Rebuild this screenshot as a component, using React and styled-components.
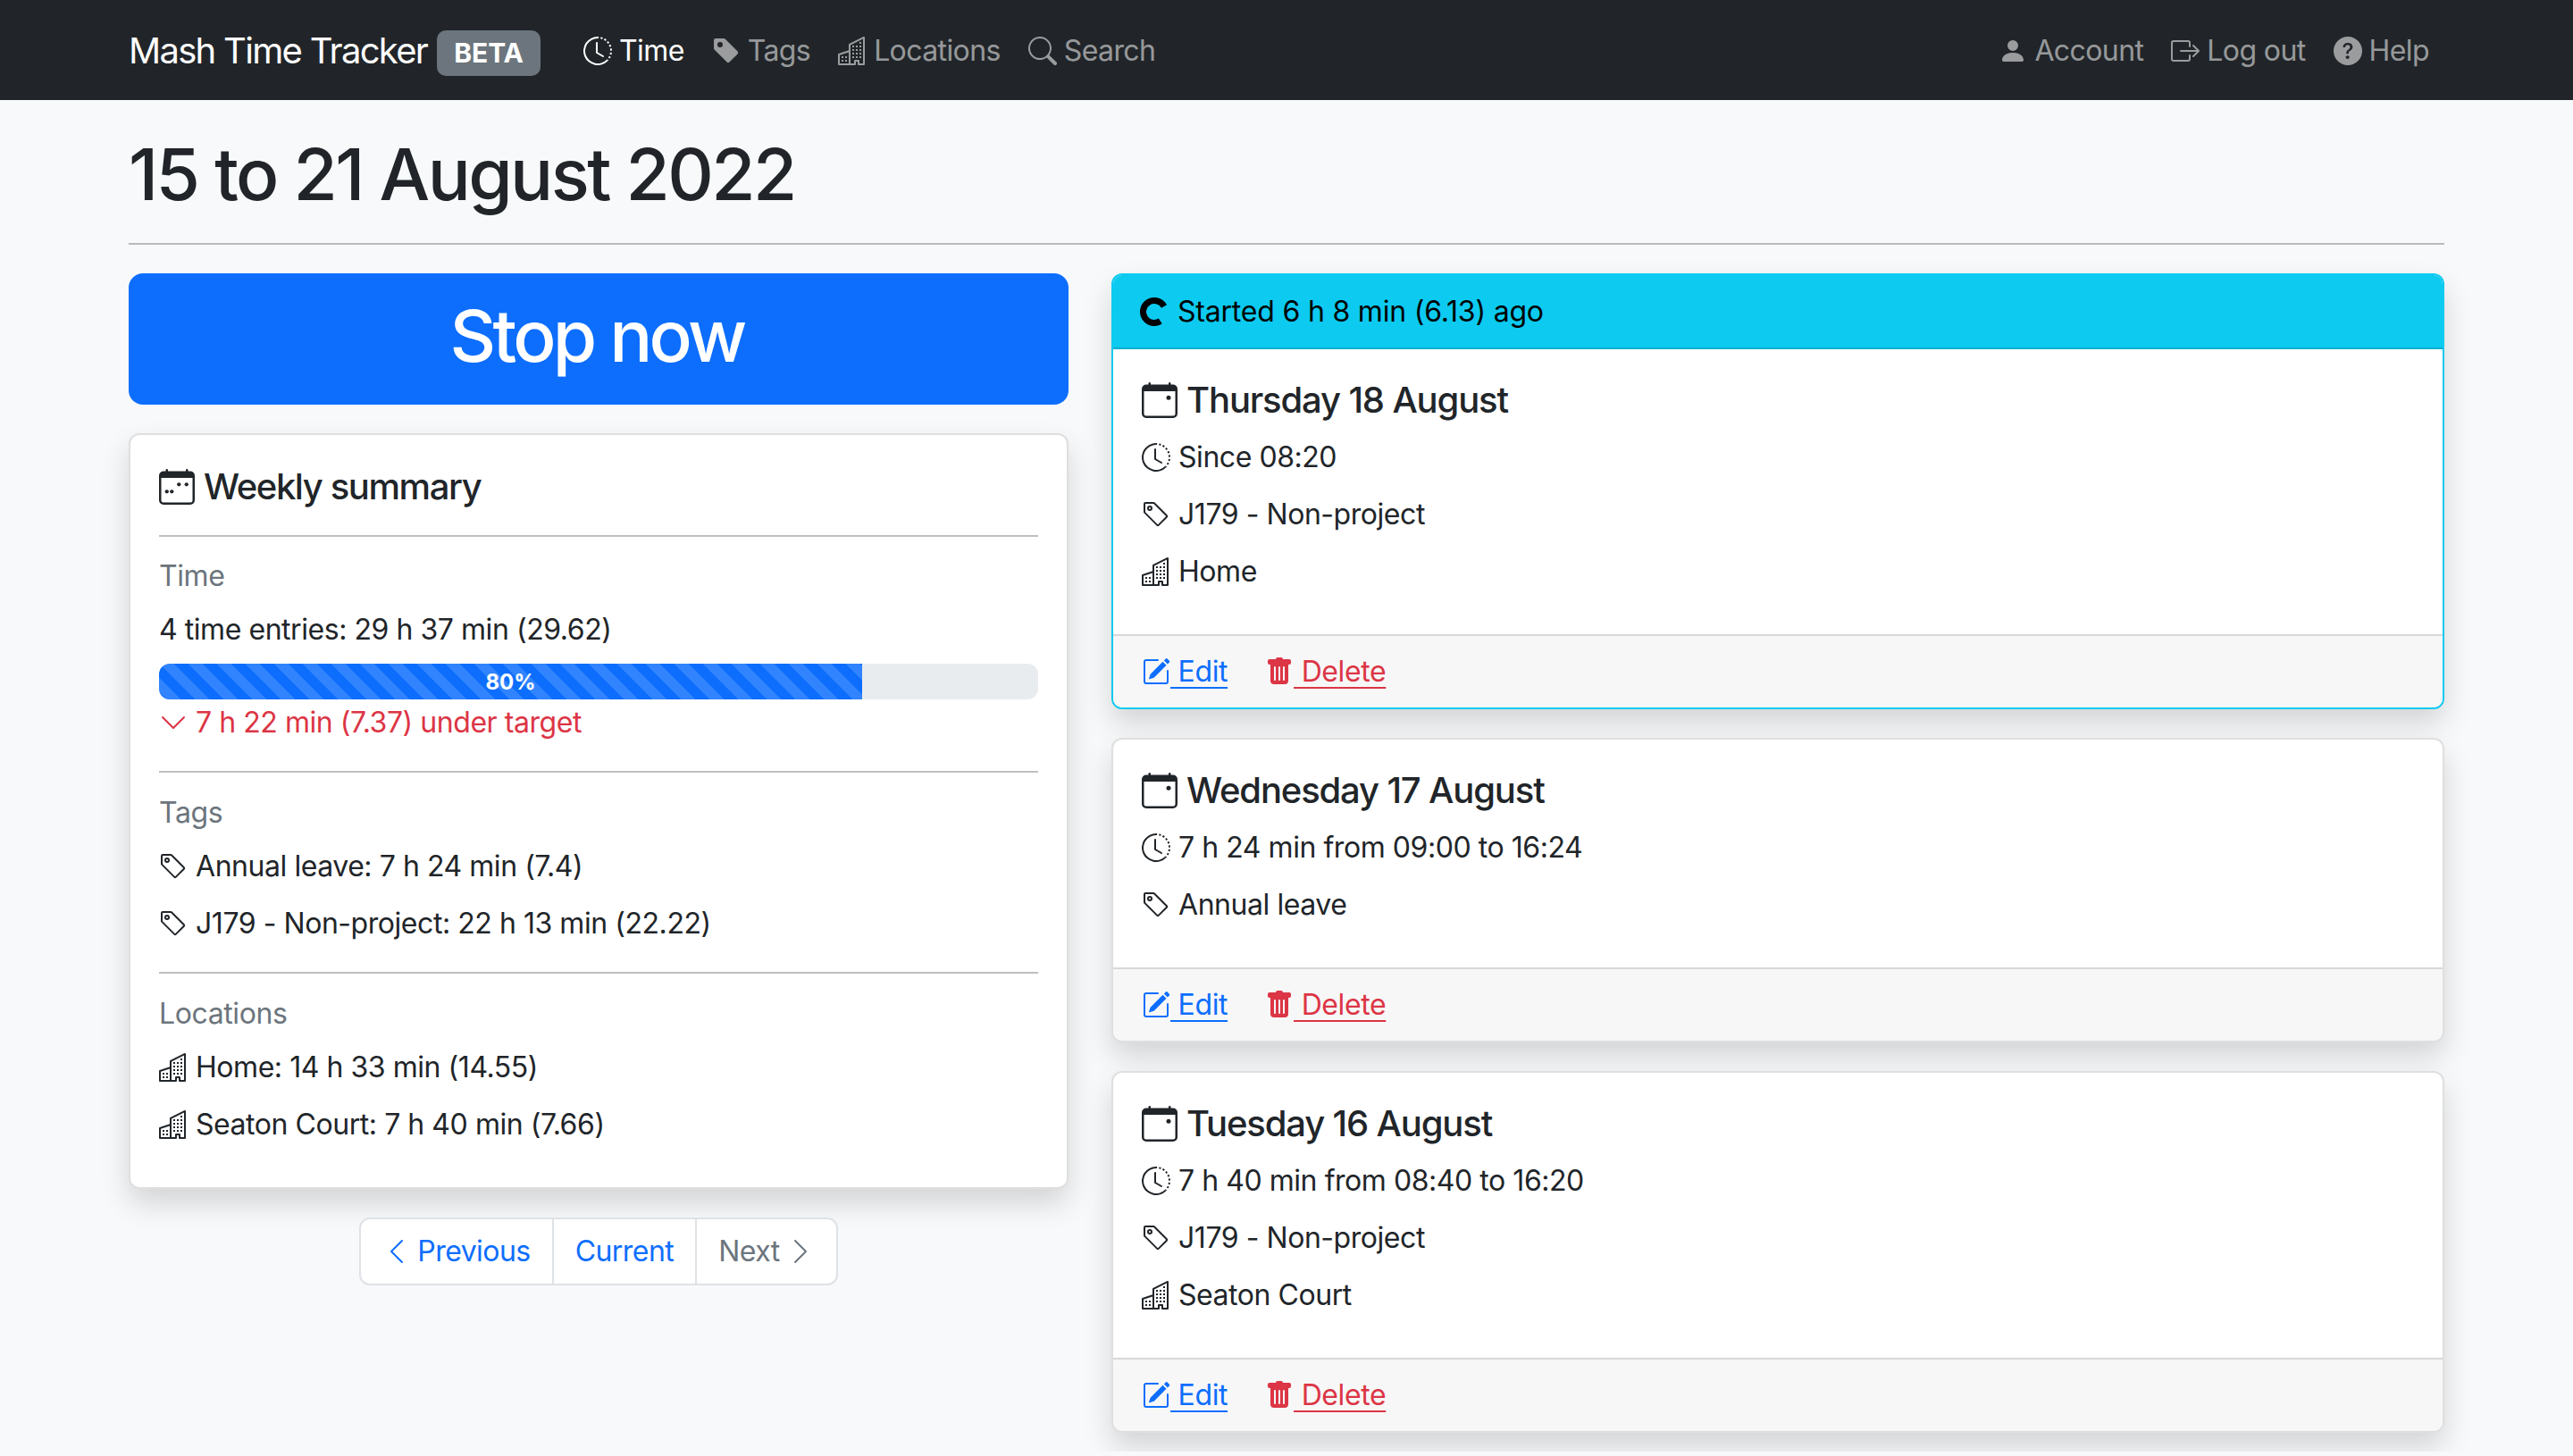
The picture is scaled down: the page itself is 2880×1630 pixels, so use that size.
import React from "react";
import styled, { createGlobalStyle } from "styled-components";
import {
  BsClockHistory, BsTagFill, BsTag, BsBuildings, BsSearch, BsPersonFill, BsBoxArrowRight,
  BsQuestionCircleFill, BsChevronLeft, BsChevronRight, BsChevronDown, BsPencilSquare, BsTrashFill,
} from "react-icons/bs";

const Global = createGlobalStyle`
  html, body { margin: 0; padding: 0; background: #f8f9fa; }
  body { font-family: Inter, "Liberation Sans", sans-serif; font-size: 32px; line-height: 48px; color: #212529; }
  * { box-sizing: border-box; }
`;

const Navbar = styled.nav`
  height: 112px; background: #212529; padding: 2px 144px 0; display: flex; align-items: center; justify-content: space-between;
`;
const NavGroup = styled.div`display: flex; align-items: center; gap: 31px; margin-right: ${p => p.$mr || 0}px;`;
const Brand = styled.div`
  display: flex; align-items: center; gap: 11px; color: #fff; font-size: 40px; margin-right: 17px; letter-spacing: -1.7px;
`;
const Badge = styled.span`
  background: #6c757d; color: #fff; font-size: 30px; font-weight: 700; line-height: 1; padding: 10px 19px 11px; border-radius: 10px; margin-top: 4px; letter-spacing: 0;
`;
const NavItem = styled.a`
  display: flex; align-items: center; gap: 8px; color: ${p => (p.$active ? "#fff" : "rgba(255,255,255,.55)")}; font-size: 32px; letter-spacing: -0.6px;
  svg { font-size: 32px; flex: none; }
`;
const Main = styled.main`padding: 0 144px 21px;`;
const Title = styled.h1`
  margin: 0 0 -3px; font-size: 80px; font-weight: 500; line-height: 96px; padding-top: 35px; letter-spacing: -2.6px; color: #212529;
`;
const Rule = styled.hr`
  margin: ${p => p.$m || "32px 0"}; border: 0; border-top: 2px solid rgba(0,0,0,.25);
`;
const Columns = styled.div`
  display: grid; grid-template-columns: 1052px 1492px; gap: 48px; align-items: start;
`;
const Stack = styled.div`display: flex; flex-direction: column; gap: 32px;`;
const StopButton = styled.button`
  height: 147px; border: 0; border-radius: 16px; background: #0d6efd; color: #fff; font: 500 80px/96px Inter, sans-serif; letter-spacing: -3.7px; width: 100%;
  padding: 0 4px 8px 0;
`;
const Card = styled.section`
  background: #fff; border: 2px solid ${p => (p.$active ? "#0dcaf0" : "rgba(0,0,0,.125)")}; border-radius: 12px;
  box-shadow: 0 16px 32px rgba(0,0,0,.15); overflow: hidden;
`;
const CardHead = styled.div`
  height: 83px; background: #0dcaf0; border-bottom: 2px solid rgba(0,0,0,.125); color: #000; padding: 0 30px; display: flex; align-items: center; gap: 10px; letter-spacing: -0.2px;
`;
const CardBody = styled.div`padding: ${p => p.$p || "30px"};`;
const Spacer = styled.div`height: 30px;`;
const CardFoot = styled.div`
  height: 82px; background: #f7f7f7; border-top: 2px solid rgba(0,0,0,.125); padding: 0 32px; display: flex; align-items: center; gap: 42px;
`;
const HeadTitle = styled.h5`
  margin: 0 0 ${p => p.$mb || 0}px; font-size: 40px; font-weight: 500; line-height: 48px; display: flex; align-items: center; gap: 10px; letter-spacing: ${p => p.$ls ?? -1.15}px;
  svg { flex: none; }
`;
const Label = styled.div`color: #6c757d; margin-bottom: 12px; font-size: 32px; letter-spacing: -0.4px;`;
const Line = styled.p`
  margin: 0 0 ${p => p.$mb ?? 16}px; display: flex; align-items: center; gap: 9px; color: ${p => p.$color || "inherit"}; letter-spacing: -0.45px; height: 48px;
  svg { font-size: 32px; flex: none; }
`;
const TargetLine = styled(Line)`margin-top: 2px;`;
const Progress = styled.div`
  height: 40px; background: #e9ecef; border-radius: 12px; overflow: hidden;
`;
const Bar = styled.div`
  height: 100%; background-color: #0d6efd; color: #fff; font-size: 24px; font-weight: 700; line-height: 42px; text-align: center;
  background-image: linear-gradient(45deg, rgba(255,255,255,.15) 25%, transparent 25%, transparent 50%, rgba(255,255,255,.15) 50%, rgba(255,255,255,.15) 75%, transparent 75%, transparent);
  background-size: 32px 32px;
`;
const Pager = styled.div`
  align-self: center; display: flex; background: #fff; border: 2px solid #dee2e6; border-radius: 12px; height: 76px;
`;
const PageItem = styled.a`
  display: flex; align-items: center; gap: 7px; padding: 0 24px; color: ${p => (p.$off ? "#6c757d" : "#0d6efd")}; letter-spacing: -0.55px;
  & + & { border-left: 2px solid #dee2e6; }
  svg { font-size: 32px; flex: none; }
`;
const ActionLink = styled.a`
  color: ${p => p.$color}; letter-spacing: -0.4px; display: inline-flex; align-items: center;
  svg { font-size: 32px; flex: none; }
`;
const ActionText = styled.span`
  white-space: pre; text-decoration: underline; text-underline-offset: 6px; text-decoration-thickness: 2px;
`;

const Calendar = ({ size = 40, week }) => (
  <svg width={size} height={size} viewBox="0 0 16 16" fill="#212529">
    <path d="M3.5 0a.5.5 0 0 1 .5.5V1h8V.5a.5.5 0 0 1 1 0V1h1a2 2 0 0 1 2 2v11a2 2 0 0 1-2 2H2a2 2 0 0 1-2-2V3a2 2 0 0 1 2-2h1V.5a.5.5 0 0 1 .5-.5zM1 4v10a1 1 0 0 0 1 1h12a1 1 0 0 0 1-1V4H1z" />
    {week ? (
      <>
        <circle cx="8.9" cy="6.9" r=".85" /><circle cx="12.3" cy="6.9" r=".85" />
        <circle cx="3.5" cy="10.1" r=".85" /><circle cx="5.7" cy="10.1" r=".85" />
      </>
    ) : (
      <circle cx="12" cy="6.9" r="1" />
    )}
  </svg>
);

const Spinner = () => (
  <svg width="32" height="32" viewBox="0 0 32 32" style={{ flex: "none" }}>
    <circle cx="16" cy="16" r="12.5" fill="none" stroke="#000" strokeWidth="7" strokeDasharray="59.5 19" transform="rotate(57 16 16)" />
  </svg>
);

const Actions = () => (
  <CardFoot>
    <ActionLink $color="#0d6efd"><BsPencilSquare /><ActionText> Edit</ActionText></ActionLink>
    <ActionLink $color="#dc3545"><BsTrashFill /><ActionText> Delete</ActionText></ActionLink>
  </CardFoot>
);

const EntryBody = ({ day, lines }) => (
  <CardBody $p="33px 32px 0">
    <HeadTitle $mb={16}><Calendar />{day}</HeadTitle>
    {lines.map(([Icon, text]) => (
      <Line key={text}><Icon />{text}</Line>
    ))}
    <Spacer />
  </CardBody>
);

const Entry = ({ day, lines }) => (
  <Card>
    <EntryBody day={day} lines={lines} />
    <Actions />
  </Card>
);

export default function App() {
  return (
    <>
      <Global />
      <Navbar>
        <NavGroup>
          <Brand>Mash Time Tracker <Badge>BETA</Badge></Brand>
          <NavItem $active><BsClockHistory />Time</NavItem>
          <NavItem><BsTagFill />Tags</NavItem>
          <NavItem><BsBuildings />Locations</NavItem>
          <NavItem><BsSearch />Search</NavItem>
        </NavGroup>
        <NavGroup $mr={17}>
          <NavItem><BsPersonFill />Account</NavItem>
          <NavItem><BsBoxArrowRight />Log out</NavItem>
          <NavItem><BsQuestionCircleFill />Help</NavItem>
        </NavGroup>
      </Navbar>
      <Main>
        <Title>15 to 21 August 2022</Title>
        <Rule />
        <Columns>
          <Stack>
            <StopButton>Stop now</StopButton>
            <Card>
              <CardBody $p="34px 32px 30px">
                <HeadTitle $ls={-1.4}><Calendar week />Weekly summary</HeadTitle>
                <Rule $m="30px 0 20px" />
                <Label>Time</Label>
                <Line $mb={14}>4 time entries: 29 h 37 min (29.62)</Line>
                <Progress><Bar style={{ width: "80%" }}>80%</Bar></Progress>
                <TargetLine $color="#dc3545" $mb={30}><BsChevronDown />7 h 22 min (7.37) under target</TargetLine>
                <Rule $m="0 0 21px" />
                <Label>Tags</Label>
                <Line><BsTag />Annual leave: 7 h 24 min (7.4)</Line>
                <Line $mb={30}><BsTag />J179 - Non-project: 22 h 13 min (22.22)</Line>
                <Rule $m="0 0 21px" />
                <Label>Locations</Label>
                <Line><BsBuildings />Home: 14 h 33 min (14.55)</Line>
                <Line><BsBuildings />Seaton Court: 7 h 40 min (7.66)</Line>
              </CardBody>
            </Card>
            <Pager>
              <PageItem><BsChevronLeft />Previous</PageItem>
              <PageItem>Current</PageItem>
              <PageItem $off>Next<BsChevronRight /></PageItem>
            </Pager>
          </Stack>
          <Stack>
            <Card $active>
              <CardHead><Spinner />Started 6 h 8 min (6.13) ago</CardHead>
              <EntryBody day="Thursday 18 August" lines={[[BsClockHistory, "Since 08:20"], [BsTag, "J179 - Non-project"], [BsBuildings, "Home"]]} />
              <Actions />
            </Card>
            <Entry day="Wednesday 17 August" lines={[[BsClockHistory, "7 h 24 min from 09:00 to 16:24"], [BsTag, "Annual leave"]]} />
            <Entry day="Tuesday 16 August" lines={[[BsClockHistory, "7 h 40 min from 08:40 to 16:20"], [BsTag, "J179 - Non-project"], [BsBuildings, "Seaton Court"]]} />
          </Stack>
        </Columns>
      </Main>
    </>
  );
}
